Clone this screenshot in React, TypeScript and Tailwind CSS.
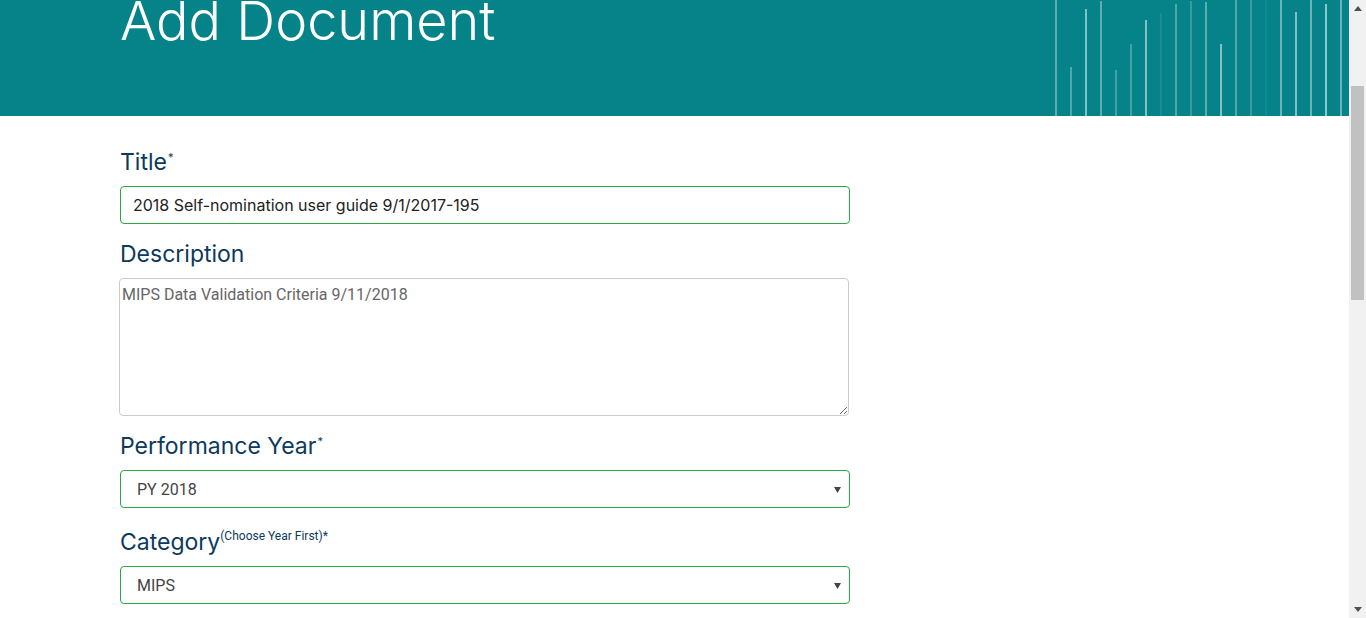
import React from 'react';

const bars: [number, number, number][] = [
  [1056, 0, 0.35],
  [1071, 67, 0.3],
  [1086, 9, 0.5],
  [1101, 1, 0.35],
  [1116, 70, 0.25],
  [1131, 44, 0.25],
  [1146, 20, 0.5],
  [1161, 13, 0.08],
  [1176, 4, 0.3],
  [1191, 1, 0.2],
  [1206, 2, 0.35],
  [1221, 44, 0.5],
  [1236, 0, 0.3],
  [1251, 0, 0.2],
  [1266, 0, 0.05],
  [1281, 0, 0.4],
  [1296, 12, 0.5],
  [1311, 0, 0.4],
  [1326, 4, 0.55],
  [1341, 0, 0.4],
];

function Req() {
  return <sup className="text-[11px] relative -top-[9px] ml-[1px] align-baseline">*</sup>;
}

function Select({ value }: { value: string }) {
  return (
    <div className="h-[38px] w-[730px] border border-[#28a745] rounded-[4px] flex items-center justify-between pl-[16px] pr-[8px] pt-[1px] text-[16px] text-[#444] font-['Roboto',sans-serif] bg-white">
      <span>{value}</span>
      <svg width="7" height="6" viewBox="0 0 7 6">
        <path d="M0 0 H7 L3.5 6 Z" fill="#444" />
      </svg>
    </div>
  );
}

export default function App() {
  return (
    <div className="h-[618px] w-[1366px] overflow-hidden flex bg-white font-['Inter',sans-serif]">
      <div className="w-[1349px] flex flex-col">
        <header className="relative h-[116px] bg-[#058388] overflow-hidden shrink-0">
          <h1 className="pl-[120px] -mt-[6px] text-[54px] leading-none font-light text-white">
            Add Document
          </h1>
          <svg className="absolute left-0 top-0" width="1349" height="116">
            {bars.map(([x, top, o]) => (
              <rect key={x} x={x - 1} y={top} width="2" height={116 - top} fill="#ffffff" opacity={o} />
            ))}
          </svg>
        </header>

        <form className="pl-[120px] flex flex-col text-[#0c3a5e]">
          <label className="mt-[32px] h-[28px] text-[23px] leading-[28px]">
            Title<Req />
          </label>
          <input
            readOnly
            value="2018 Self-nomination user guide 9/1/2017-195"
            className="mt-[10px] h-[38px] w-[730px] border border-[#28a745] rounded-[4px] px-[12px] text-[16px] text-[#222] outline-none"
          />

          <label className="mt-[16px] h-[28px] text-[23px] leading-[28px]">Description</label>
          <textarea
            readOnly
            value="MIPS Data Validation Criteria 9/11/2018"
            className="mt-[10px] -ml-[1px] h-[138px] w-[730px] border border-[#ccc] rounded-[4px] px-[2px] py-[5px] text-[16px] leading-[22px] text-[#666] font-['Roboto',sans-serif] outline-none"
          />

          <label className="mt-[16px] h-[28px] text-[23px] leading-[28px]">
            Performance Year<Req />
          </label>
          <div className="mt-[10px]">
            <Select value="PY 2018" />
          </div>

          <label className="mt-[20px] h-[28px] text-[23px] leading-[28px]">
            Category
            <sup className="text-[12px] relative -top-[10px] align-baseline font-['Roboto',sans-serif]">(Choose Year First)*</sup>
          </label>
          <div className="mt-[10px]">
            <Select value="MIPS" />
          </div>
        </form>
      </div>

      <div className="w-[17px] h-full bg-[#f1f1f1] flex flex-col items-center">
        <div className="h-[17px] flex items-center justify-center">
          <svg width="8" height="5" viewBox="0 0 8 5"><path d="M0 5 L4 0 L8 5 Z" fill="#505050" /></svg>
        </div>
        <div className="mt-[69px] h-[214px] w-[13px] bg-[#c1c1c1]" />
        <div className="mt-auto h-[17px] flex items-center justify-center">
          <svg width="8" height="5" viewBox="0 0 8 5"><path d="M0 0 L8 0 L4 5 Z" fill="#505050" /></svg>
        </div>
      </div>
    </div>
  );
}
